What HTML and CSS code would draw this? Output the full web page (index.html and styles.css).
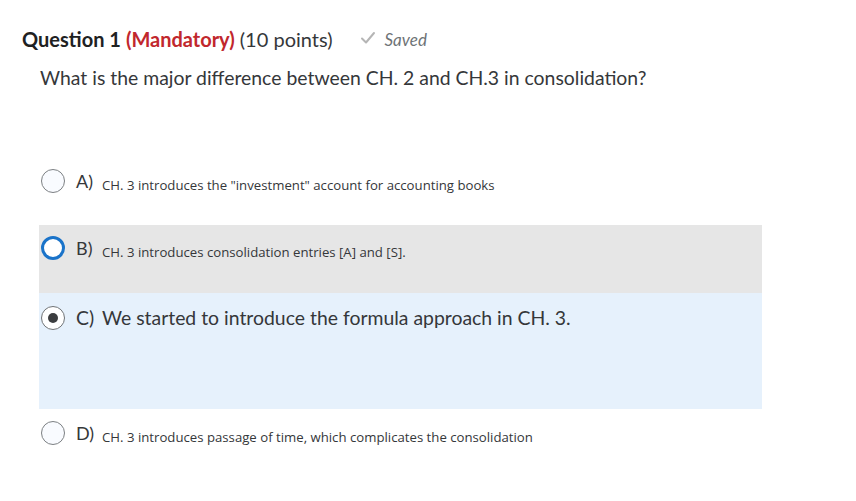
FILE: index.html
```html
<!DOCTYPE html>
<html>
<head>
<meta charset="utf-8">
<link rel="stylesheet" href="styles.css">
</head>
<body>
<div class="page">
  <div class="qhead">
    <span class="qtitle">Question 1</span>
    <span class="mand">(Mandatory)</span>
    <span class="pts">(10 points)</span>
    <span class="saved">
      <svg class="check" width="16" height="14" viewBox="0 0 16 14"><path d="M2 7.5 L6 11.5 L14 2" fill="none" stroke="#b5b5b5" stroke-width="2" stroke-linecap="round" stroke-linejoin="round"/></svg>
      <span class="savedtxt">Saved</span>
    </span>
  </div>
  <div class="qtext">What is the major difference between CH. 2 and CH.3 in consolidation?</div>
  <div class="options">
    <div class="opt">
      <span class="radio"></span>
      <span class="letter">A)</span>
      <span class="small">CH. 3 introduces the "investment" account for accounting books</span>
    </div>
    <div class="opt hover">
      <span class="radio focus"></span>
      <span class="letter">B)</span>
      <span class="small">CH. 3 introduces consolidation entries [A] and [S].</span>
    </div>
    <div class="opt selected">
      <span class="radio checked"></span>
      <span class="letter sel">C)</span>
      <span class="big">We started to introduce the formula approach in CH. 3.</span>
    </div>
    <div class="opt">
      <span class="radio"></span>
      <span class="letter">D)</span>
      <span class="small">CH. 3 introduces passage of time, which complicates the consolidation</span>
    </div>
  </div>
</div>
</body>
</html>
```
FILE: styles.css
```css
html, body { margin: 0; padding: 0; background: #fff; }
body { font-family: Lato, "Open Sans", sans-serif; color: #202122; }
.page { padding: 27px 0 0 22px; }
.qhead { display: flex; align-items: center; height: 24px; font-size: 20px; }
.qtitle { font-weight: bold; color: #202122; }
.mand { font-weight: bold; color: #c1272d; margin-left: 5px; }
.pts { margin-left: 5px; color: #35373a; }
.saved { display: flex; align-items: center; margin-left: 27px; }
.check { margin-top: -2px; }
.savedtxt { font-style: italic; font-size: 17px; color: #6e7376; margin-left: 9px; }
.qtext { margin: 15px 0 0 18px; font-size: 19.4px; color: #35373a; line-height: 24px; }
.options { margin: 67px 0 0 17px; width: 723px; }
.opt { display: flex; height: 68px; padding: 0 0 0 2px; box-sizing: border-box; align-items: flex-start; padding-top: 12px; }
.opt.hover { background: #e6e6e6; padding-top: 11px; }
.opt.selected { background: #e6f1fc; height: 116px; padding-top: 13px; }
.radio { width: 24px; height: 24px; border-radius: 50%; border: 1px solid #7c8083; box-sizing: border-box; background: #f9fbff; flex: none; position: relative; }
.radio.focus { border: 3px solid #1a73c9; background: #fff; }
.radio.checked { border: 1px solid #6f7376; background: #fff; }
.radio.checked::after { content: ""; position: absolute; left: 6px; top: 6px; width: 10px; height: 10px; border-radius: 50%; background: #3b3d3f; }
.letter { font-size: 18px; line-height: 24px; margin-left: 11px; color: #35373a; width: 26px; flex: none; }
.letter.sel { font-size: 19.4px; }
.small { font-family: "Open Sans", sans-serif; font-size: 13.2px; line-height: 24px; color: #35373a; padding-top: 4px; }
.big { font-size: 19.4px; line-height: 24px; color: #35373a; }
```
